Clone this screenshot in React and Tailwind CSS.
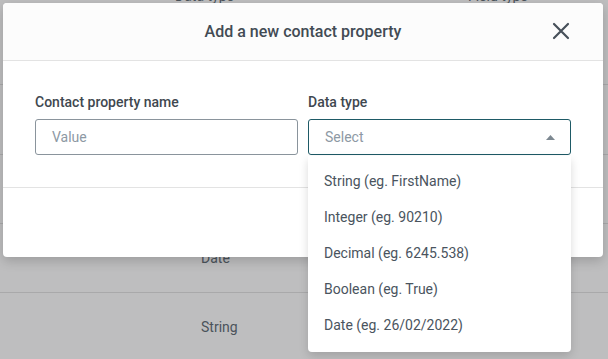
import React from "react";

export default function App() {
  const items = [
    "String (eg. FirstName)",
    "Integer (eg. 90210)",
    "Decimal (eg. 6245.538)",
    "Boolean (eg. True)",
    "Date (eg. 26/02/2022)",
  ];
  return (
    <div
      className="relative w-[608px] h-[359px] overflow-hidden bg-[#bebebf] text-[#434c55]"
      style={{ fontFamily: "Roboto, 'Liberation Sans', sans-serif" }}
    >
      {/* background table */}
      <div className="-mt-[12px] flex flex-col text-[14px] text-[#4b535b]">
        <div className="h-[97px] border-b border-[#a9a9aa] flex items-start">
          <span className="ml-[175px] leading-[16px]">Data type</span>
          <span className="ml-[234px] leading-[16px]">Field type</span>
        </div>
        <div className="h-[70px] border-b border-[#a9a9aa]" />
        <div className="h-[69px] border-b border-[#a9a9aa]" />
        <div className="h-[69px] border-b border-[#a9a9aa] flex items-center">
          <span className="ml-[201px]">Date</span>
        </div>
        <div className="h-[69px] flex items-center">
          <span className="ml-[201px]">String</span>
        </div>
      </div>

      {/* modal */}
      <div className="absolute left-[3px] top-[3px] w-[600px] h-[254px] bg-white rounded-[4px] shadow-[0_4px_12px_rgba(0,0,0,0.18)] flex flex-col">
        <div className="relative h-[58px] bg-[#fcfcfc] rounded-t-[4px] border-b border-[#e3e3e3] flex items-center justify-center">
          <span className="text-[16px] font-medium text-[#424b54]">Add a new contact property</span>
          <svg
            className="absolute right-[33px] top-[19px]"
            width="18"
            height="18"
            viewBox="0 0 18 18"
            fill="none"
            stroke="#47505a"
            strokeWidth="2.2"
            strokeLinecap="round"
          >
            <path d="M2 2L16 16M16 2L2 16" />
          </svg>
        </div>
        <div className="px-8 pt-[31px] pb-[32px] grid grid-cols-2 gap-x-[10px] border-b border-[#e3e3e3]">
          <div className="flex flex-col">
            <label className="text-[14px] font-medium leading-[20px] mb-[7px] text-[#3f4850]">Contact property name</label>
            <div className="h-[36px] border border-[#8a949c] rounded-[3px] flex items-center pl-[16px] text-[14px] text-[#8d99a4]">
              Value
            </div>
          </div>
          <div className="flex flex-col">
            <label className="text-[14px] font-medium leading-[20px] mb-[7px] text-[#3f4850]">Data type</label>
            <div className="h-[36px] border border-[#1e5a66] rounded-[3px] flex items-center justify-between pl-[16px] pr-[15px] text-[14px] text-[#8d99a4]">
              <span>Select</span>
              <svg width="9" height="5" viewBox="0 0 9 5">
                <path d="M0 5L4.5 0L9 5Z" fill="#7d8891" />
              </svg>
            </div>
          </div>
        </div>
        <div className="flex-1" />
      </div>

      {/* dropdown */}
      <div className="absolute left-[308px] top-[156px] w-[263px] h-[196px] bg-white rounded-b-[4px] shadow-[0_4px_10px_rgba(0,0,0,0.15)] pt-[7px] flex flex-col">
        {items.map((t) => (
          <div key={t} className="h-[36px] flex items-center pl-[16px] text-[14px] text-[#4a545e]">
            {t}
          </div>
        ))}
      </div>
    </div>
  );
}
